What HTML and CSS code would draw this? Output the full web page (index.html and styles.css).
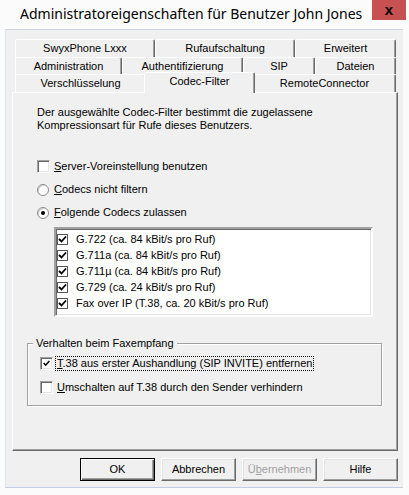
FILE: index.html
```html
<!DOCTYPE html>
<html>
<head>
<meta charset="utf-8">
<link rel="stylesheet" href="styles.css">
</head>
<body>
<div class="titlebar">
  <div class="title">Administratoreigenschaften für Benutzer John Jones</div>
  <div class="close">x</div>
</div>
<div class="client">
  <div class="tabs">
    <div class="tabrow r1">
      <div class="tab t-swyx">SwyxPhone Lxxx</div>
      <div class="tab t-ruf">Rufaufschaltung</div>
      <div class="tab t-erw">Erweitert</div>
    </div>
    <div class="tabrow r2">
      <div class="tab t-adm">Administration</div>
      <div class="tab t-auth">Authentifizierung</div>
      <div class="tab t-sip">SIP</div>
      <div class="tab t-dat">Dateien</div>
    </div>
    <div class="tabrow r3">
      <div class="tab t-ver">Verschlüsselung</div>
      <div class="tab sel t-codec">Codec-Filter</div>
      <div class="tab t-rem">RemoteConnector</div>
    </div>
  </div>
  <div class="panel">
    <p class="desc">Der ausgewählte Codec-Filter bestimmt die zugelassene<br>Kompressionsart für Rufe dieses Benutzers.</p>
    <div class="opt first">
      <span class="cb"></span><span class="lbl"><u>S</u>erver-Voreinstellung benutzen</span>
    </div>
    <div class="opt">
      <span class="rb"></span><span class="lbl"><u>C</u>odecs nicht filtern</span>
    </div>
    <div class="opt">
      <span class="rb on"></span><span class="lbl"><u>F</u>olgende Codecs zulassen</span>
    </div>
    <div class="listbox">
      <div class="item"><span class="lcb"><svg viewBox="0 0 9 9" width="9" height="9"><path d="M1 4 L3.5 6.5 L8 1.5" fill="none" stroke="#000" stroke-width="1.8"/></svg></span>G.722 (ca. 84 kBit/s pro Ruf)</div>
      <div class="item"><span class="lcb"><svg viewBox="0 0 9 9" width="9" height="9"><path d="M1 4 L3.5 6.5 L8 1.5" fill="none" stroke="#000" stroke-width="1.8"/></svg></span>G.711a (ca. 84 kBit/s pro Ruf)</div>
      <div class="item"><span class="lcb"><svg viewBox="0 0 9 9" width="9" height="9"><path d="M1 4 L3.5 6.5 L8 1.5" fill="none" stroke="#000" stroke-width="1.8"/></svg></span>G.711µ (ca. 84 kBit/s pro Ruf)</div>
      <div class="item"><span class="lcb"><svg viewBox="0 0 9 9" width="9" height="9"><path d="M1 4 L3.5 6.5 L8 1.5" fill="none" stroke="#000" stroke-width="1.8"/></svg></span>G.729 (ca. 24 kBit/s pro Ruf)</div>
      <div class="item"><span class="lcb"><svg viewBox="0 0 9 9" width="9" height="9"><path d="M1 4 L3.5 6.5 L8 1.5" fill="none" stroke="#000" stroke-width="1.8"/></svg></span>Fax over IP (T.38, ca. 20 kBit/s pro Ruf)</div>
    </div>
    <div class="group">
      <div class="group-label">Verhalten beim Faxempfang</div>
      <div class="opt g1">
        <span class="cb"><svg viewBox="0 0 11 11" width="11" height="11"><path d="M2 5 L4.5 7.5 L9 2.5" fill="none" stroke="#000" stroke-width="1.8"/></svg></span><span class="lbl focus"><u>T</u>.38 aus erster Aushandlung (SIP INVITE) entfernen</span>
      </div>
      <div class="opt g2">
        <span class="cb"></span><span class="lbl"><u>U</u>mschalten auf T.38 durch den Sender verhindern</span>
      </div>
    </div>
  </div>
  <div class="buttons">
    <div class="btn def">OK</div>
    <div class="btn">Abbrechen</div>
    <div class="btn dis">Ü<u>b</u>ernehmen</div>
    <div class="btn">Hilfe</div>
  </div>
</div>
</body>
</html>
```
FILE: styles.css
```css
* { box-sizing: border-box; }
html, body { margin: 0; padding: 0; }
body {
  width: 409px;
  height: 495px;
  overflow: hidden;
  background: #fbfbfc;
  font-family: "Liberation Sans", Arial, sans-serif;
  font-size: 11px;
  color: #000;
}
.titlebar {
  height: 29px;
  display: flex;
  justify-content: space-between;
  align-items: flex-start;
}
.title {
  font-family: "Noto Sans", sans-serif;
  font-size: 14px;
  line-height: 20px;
  padding: 4px 0 0 20px;
  white-space: nowrap;
  letter-spacing: 0;
}
.close {
  width: 34px;
  height: 20px;
  margin-right: 3px;
  background: #c75050;
  display: flex;
  align-items: center;
  justify-content: center;
  font: bold 15px/1 "Liberation Sans", Arial, sans-serif;
  padding-bottom: 2px;
  flex: none;
}
.client {
  margin-left: 5px;
  width: 398px;
  background: #f0f0f0;
  border-top: 1px solid #cdd5e1;
  border-left: 1px solid #dfe3ea;
  border-bottom: 1px solid #c3cde0;
  padding: 9px 5px 6px 6px;
}
.tabs { margin-left: 3px; }
.tabrow { display: flex; height: 18px; }
.tabrow.r2 { height: 17px; }
.tab {
  height: 18px;
  border: 1px solid;
  border-bottom: none;
  border-color: #fff #696969 transparent #fff;
  border-radius: 2px 2px 0 0;
  box-shadow: inset -1px 0 #a0a0a0;
  background: #f0f0f0;
  text-align: center;
  line-height: 17px;
  white-space: nowrap;
}
.r2 .tab { height: 17px; line-height: 16px; }
.t-swyx { width: 140px; }
.t-ruf { width: 140px; }
.t-erw { width: 101px; }
.t-adm { width: 107px; }
.t-auth { width: 121px; }
.t-sip { width: 72px; }
.t-dat { width: 81px; }
.t-ver { width: 131px; }
.t-rem { width: 143px; }
.tab.sel {
  position: relative;
  z-index: 2;
  width: 111px;
  height: 21px;
  margin: -2px -2px 0 -2px;
  line-height: 16px;
}
.panel {
  width: 386px;
  height: 359px;
  border: 1px solid;
  border-color: #fff #696969 #696969 #fff;
  box-shadow: inset -1px -1px #a0a0a0;
  padding: 13px 0 0 24px;
}
.desc { margin: 0; line-height: 13px; }
.opt {
  display: flex;
  align-items: center;
  height: 17px;
  margin-top: 6px;
}
.opt.first { margin-top: 26px; }
.cb {
  width: 13px;
  height: 13px;
  flex: none;
  background: #fff;
  border: 1px solid;
  border-color: #a0a0a0 #fff #fff #a0a0a0;
  box-shadow: inset 1px 1px #696969, inset -1px -1px #e3e3e3;
  margin-right: 2px;
  display: flex;
  align-items: center;
  justify-content: center;
}
.cb svg { display: block; width: 9px; height: 9px; }
.rb {
  width: 12px;
  height: 12px;
  flex: none;
  border-radius: 50%;
  background: #fff;
  border: 1px solid #8a8a8a;
  box-shadow: inset 1px 1px #d0d0d0;
  margin-right: 3px;
  display: flex;
  align-items: center;
  justify-content: center;
}
.rb.on::after {
  content: "";
  width: 4px;
  height: 4px;
  border-radius: 50%;
  background: #000;
}
.lbl {
  border: 1px dotted transparent;
  padding: 0 1px;
  line-height: 13px;
  white-space: nowrap;
}
.lbl.focus { border-color: #000; }
.listbox {
  margin: 6px 0 0 17px;
  width: 319px;
  height: 90px;
  background: #fff;
  border: 2px solid;
  border-color: #a0a0a0 #fff #fff #a0a0a0;
  box-shadow: inset 1px 1px #696969, inset -1px -1px #e3e3e3;
  padding-top: 2px;
}
.item {
  height: 16px;
  display: flex;
  align-items: center;
  white-space: nowrap;
}
.lcb {
  width: 11px;
  height: 11px;
  margin: 0 8px 0 1px;
  flex: none;
  background: #fff;
  border: 1px solid #555;
  display: flex;
  align-items: center;
  justify-content: center;
}
.lcb svg { display: block; }
.group {
  margin: 26px 0 0 -10px;
  width: 355px;
  height: 63px;
  border: 1px solid #a0a0a0;
  box-shadow: 1px 1px #fff, inset 1px 1px #fff;
  padding-left: 12px;
}
.group-label {
  width: fit-content;
  margin: -7px 0 0 -7px;
  padding: 0 3px;
  background: #f0f0f0;
  line-height: 13px;
}
.opt.g1 { margin-top: 5px; }
.opt.g2 { margin-top: 7px; }
.buttons {
  display: flex;
  justify-content: flex-end;
  gap: 6px;
  margin-top: 7px;
}
.btn {
  width: 75px;
  height: 23px;
  border: 1px solid;
  border-color: #fff #696969 #696969 #fff;
  box-shadow: inset -1px -1px #a0a0a0, inset 1px 1px #e3e3e3;
  text-align: center;
  line-height: 21px;
}
.btn.def {
  border-color: #000;
  box-shadow: inset 1px 1px #fff, inset -1px -1px #696969, inset -2px -2px #a0a0a0;
}
.btn.dis { color: #a0a0a0; }
```
